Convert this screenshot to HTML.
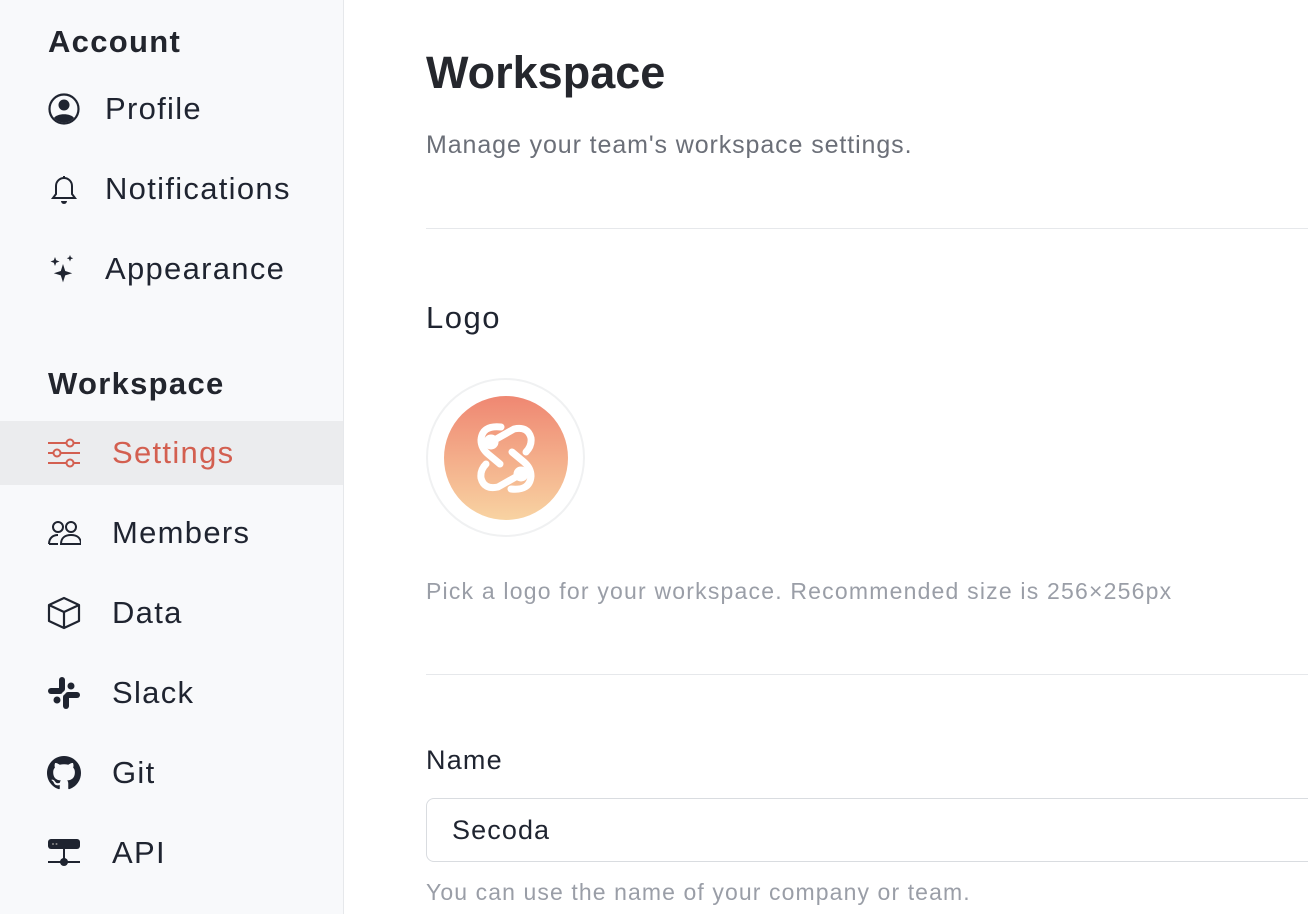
<!DOCTYPE html>
<html><head><meta charset="utf-8"><style>
*{margin:0;padding:0;box-sizing:border-box}
body{width:1308px;height:914px;overflow:hidden;background:#fff;font-family:"Liberation Sans",sans-serif;color:#1f2430;position:relative}
.sb{position:absolute;left:0;top:0;width:344px;height:914px;background:#f8f9fb;border-right:1px solid #e6e8eb}
.h{position:absolute;left:48px;font-weight:bold;font-size:31px;letter-spacing:1.3px;color:#22252d}
.it{position:absolute;left:0;width:343px;height:64px;display:flex;align-items:center;font-size:31px;letter-spacing:1.3px;color:#1f2430}
.it svg{position:absolute;left:47px}
.it span{position:absolute}
.sel{background:#ebecee;color:#d35f50}
.m{position:absolute;left:426px}
</style></head><body>
<div class="sb">
<div class="h" style="top:24px">Account</div>
<div class="it" style="top:77px"><svg width="34" height="34" viewBox="0 0 34 34"><circle cx="17" cy="17" r="14.5" fill="none" stroke="#1f2430" stroke-width="2.2"/><circle cx="17" cy="13" r="5.5" fill="#1f2430"/><path d="M7 26c3-5 17-5 20 0c-3 3-6 4.5-10 4.5s-7-1.5-10-4.5z" fill="#1f2430"/></svg><span style="left:105px">Profile</span></div>
<div class="it" style="top:157px"><svg width="34" height="34" viewBox="0 0 34 34"><path d="M17 4v2M9 22V14a8 8 0 0 1 16 0v8l3 4H6z" fill="none" stroke="#1f2430" stroke-width="2"/><path d="M14 29h6a3 3 0 0 1-6 0z" fill="#1f2430"/></svg><span style="left:105px">Notifications</span></div>
<div class="it" style="top:237px"><svg width="34" height="34" viewBox="0 0 34 34"><path d="M16 12l2.2 7 7 2.2-7 2.2-2.2 7-2.2-7-7-2.2 7-2.2z M8 5l1.2 3.3 3.3 1.2-3.3 1.2L8 14l-1.2-3.3L3.5 9.5l3.3-1.2z M23 3l.9 2.3 2.3.9-2.3.9L23 9.5l-.9-2.4-2.3-.9 2.3-.9z" fill="#1f2430"/></svg><span style="left:105px">Appearance</span></div>
<div class="h" style="top:366px">Workspace</div>
<div class="it sel" style="top:421px"><svg width="34" height="34" viewBox="0 0 34 34" fill="none" stroke="#d35f50" stroke-width="2"><path d="M1 7h32M1 17h32M1 27h32"/><circle cx="23" cy="7" r="3.5" fill="#ebecee"/><circle cx="10" cy="17" r="3.5" fill="#ebecee"/><circle cx="23" cy="27" r="3.5" fill="#ebecee"/></svg><span style="left:112px">Settings</span></div>
<div class="it" style="top:501px"><svg width="34" height="34" viewBox="0 0 34 34" fill="none" stroke="#1f2430" stroke-width="2"><circle cx="11" cy="11" r="5"/><circle cx="24" cy="11" r="5"/><path d="M2 28c0-6 4-9 9-9M14 28c0-6 4-9 10-9s10 3 10 9z M2 28h9"/></svg><span style="left:112px">Members</span></div>
<div class="it" style="top:581px"><svg width="34" height="34" viewBox="0 0 34 34" fill="none" stroke="#1f2430" stroke-width="2.2" stroke-linejoin="round"><path d="M17 2L32 9v16l-15 7L2 25V9z M2 9l15 7 15-7 M17 16v16"/></svg><span style="left:112px">Data</span></div>
<div class="it" style="top:661px"><svg width="34" height="34" viewBox="0 0 34 34" fill="#1f2430"><rect x="12" y="1" width="6" height="15" rx="3"/><rect x="1" y="12" width="15" height="6" rx="3"/><rect x="16" y="18" width="6" height="15" rx="3"/><rect x="18" y="16" width="15" height="6" rx="3"/><circle cx="24" cy="10" r="3.5"/><circle cx="10" cy="24" r="3.5"/></svg><span style="left:112px">Slack</span></div>
<div class="it" style="top:741px"><svg width="34" height="34" viewBox="0 0 16 16"><path fill="#1f2430" d="M8 0C3.58 0 0 3.58 0 8c0 3.540 2.29 6.530 5.47 7.590.4.07.55-.17.55-.38 0-.19-.01-.82-.01-1.49-2.010.37-2.530-.49-2.690-.94-.09-.23-.48-.94-.82-1.130-.28-.15-.68-.52-.01-.53.63-.01 1.080.58 1.230.82.72 1.210 1.870.87 2.330.66.07-.52.28-.87.51-1.070-1.780-.2-3.640-.89-3.640-3.950 0-.87.31-1.590.82-2.150-.08-.2-.36-1.020.08-2.120 0 0 .67-.21 2.200.82.64-.18 1.320-.27 2-.27.68 0 1.360.09 2 .27 1.530-1.040 2.200-.82 2.200-.82.44 1.100.16 1.920.08 2.120.51.56.82 1.270.82 2.150 0 3.070-1.870 3.750-3.650 3.950.29.25.54.73.54 1.480 0 1.070-.01 1.930-.01 2.200 0 .21.15.46.55.38A8.013 8.013 0 0016 8c0-4.420-3.580-8-8-8z"/></svg><span style="left:112px">Git</span></div>
<div class="it" style="top:821px"><svg width="34" height="34" viewBox="0 0 34 34"><rect x="1" y="3" width="32" height="10" rx="3" fill="#1f2430"/><circle cx="6" cy="8" r="1" fill="#888"/><circle cx="9.5" cy="8" r="1" fill="#888"/><path d="M17 13v11M1 26h32" stroke="#1f2430" stroke-width="2"/><circle cx="17" cy="26" r="4" fill="#1f2430"/></svg><span style="left:112px">API</span></div>
</div>
<div class="m" style="top:47px;font-size:45px;font-weight:bold;color:#25272d">Workspace</div>
<div class="m" style="top:131px;font-size:25px;letter-spacing:0.9px;color:#6b6f78">Manage your team's workspace settings.</div>
<div class="m" style="top:228px;width:900px;border-top:1px solid #e6e8eb"></div>
<div class="m" style="top:300px;font-size:31px;letter-spacing:1.5px;color:#1f2430">Logo</div>
<div class="m" style="top:378px;width:159px;height:159px;border-radius:50%;border:2px solid #f0f1f2;display:flex;align-items:center;justify-content:center">
<div style="width:124px;height:124px;border-radius:50%;background:linear-gradient(#ef8772,#f8d3a2);display:flex;align-items:center;justify-content:center">
<svg width="80" height="80" viewBox="0 0 80 80" fill="none" stroke="#fff" stroke-width="7" stroke-linecap="round" stroke-linejoin="round">
<path d="M35 9Q16 7 15 22Q15 30 22 36L34 46"/><path d="M25 24L48 11Q62 8 65 20Q66 28 60 34"/><circle cx="25" cy="24" r="4" fill="#fff"/>
<g transform="rotate(180 40 40)"><path d="M35 9Q16 7 15 22Q15 30 22 36L34 46"/><path d="M25 24L48 11Q62 8 65 20Q66 28 60 34"/><circle cx="25" cy="24" r="4" fill="#fff"/></g></svg></div></div>
<div class="m" style="top:578px;font-size:23px;letter-spacing:1.2px;color:#9a9ea7">Pick a logo for your workspace. Recommended size is 256×256px</div>
<div class="m" style="top:674px;width:900px;border-top:1px solid #e6e8eb"></div>
<div class="m" style="top:745px;font-size:27px;letter-spacing:1.2px;color:#1f2430">Name</div>
<div class="m" style="top:798px;width:900px;height:64px;border:1.5px solid #d9dce0;border-radius:8px;font-size:27px;letter-spacing:1.1px;padding:16px 0 0 25px;color:#1f2430">Secoda</div>
<div class="m" style="top:879px;font-size:23px;letter-spacing:1.1px;color:#9a9ea7">You can use the name of your company or team.</div>
</body></html>
